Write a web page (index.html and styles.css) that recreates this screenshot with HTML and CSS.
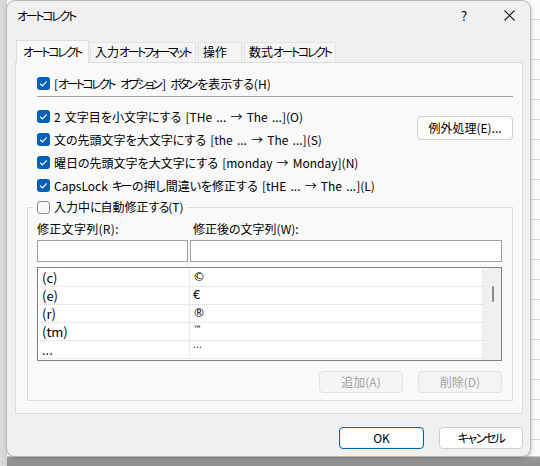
FILE: index.html
```html
<!DOCTYPE html>
<html lang="ja">
<head>
<meta charset="utf-8">
<link rel="stylesheet" href="styles.css">
</head>
<body>
<div class="backdrop">
  <div class="dialog">
    <div class="titlebar">
      <span class="title">オートコレクト</span>
      <span class="help">?</span>
      <span class="close"><svg width="11" height="11" viewBox="0 0 11 11"><path d="M0.5 0.5 L10.5 10.5 M10.5 0.5 L0.5 10.5" stroke="#1a1a1a" stroke-width="1.1" fill="none"/></svg></span>
    </div>
    <div class="tabs">
      <div class="tab active">オートコレクト</div>
      <div class="tab t2">入力<span class="k">オートフォーマット</span></div>
      <div class="tab t3">操作</div>
      <div class="tab t4">数式<span class="k">オートコレクト</span></div>
    </div>
    <div class="panel">
      <div class="row top-row">
        <span class="cb on"><svg viewBox="0 0 13 13"><path d="M3.2 6.8 L5.4 8.9 L9.8 4.4" stroke="#fff" stroke-width="1.3" fill="none"/></svg></span>
        <span class="lbl">[<span class="k">オートコレクト</span> <span class="k">オプション</span>] <span class="k">ボタン</span><span class="h">を</span>表示<span class="h">する</span>(H)</span>
      </div>
      <div class="sep"></div>
      <div class="opts">
        <div class="opt-list">
          <div class="row">
            <span class="cb on"><svg viewBox="0 0 13 13"><path d="M3.2 6.8 L5.4 8.9 L9.8 4.4" stroke="#fff" stroke-width="1.3" fill="none"/></svg></span>
            <span class="lbl">2 文字目<span class="h">を</span>小文字<span class="h">にする</span> [THe ... → The ...](O)</span>
          </div>
          <div class="row">
            <span class="cb on"><svg viewBox="0 0 13 13"><path d="M3.2 6.8 L5.4 8.9 L9.8 4.4" stroke="#fff" stroke-width="1.3" fill="none"/></svg></span>
            <span class="lbl">文<span class="h">の</span>先頭文字<span class="h">を</span>大文字<span class="h">にする</span> [the ... → The ...](S)</span>
          </div>
          <div class="row">
            <span class="cb on"><svg viewBox="0 0 13 13"><path d="M3.2 6.8 L5.4 8.9 L9.8 4.4" stroke="#fff" stroke-width="1.3" fill="none"/></svg></span>
            <span class="lbl">曜日<span class="h">の</span>先頭文字<span class="h">を</span>大文字<span class="h">にする</span> [monday → Monday](N)</span>
          </div>
          <div class="row">
            <span class="cb on"><svg viewBox="0 0 13 13"><path d="M3.2 6.8 L5.4 8.9 L9.8 4.4" stroke="#fff" stroke-width="1.3" fill="none"/></svg></span>
            <span class="lbl">CapsLock <span class="k">キー</span><span class="h">の</span>押<span class="h">し</span>間違<span class="h">いを</span>修正<span class="h">する</span> [tHE ... → The ...](L)</span>
          </div>
        </div>
        <button class="btn exc">例外処理(E)...</button>
      </div>
      <fieldset class="group">
        <legend class="legend">
          <span class="cb off"></span>
          <span class="lbl">入力中<span class="h">に</span>自動修正<span class="h">する</span>(T)</span>
        </legend>
        <div class="fields">
          <div class="flabel">修正文字列(R):</div>
          <div class="flabel f2">修正後<span class="h">の</span>文字列(W):</div>
          <div class="input"></div>
          <div class="input"></div>
        </div>
        <div class="list">
          <div class="rows">
            <div class="lrow"><span class="c1">(c)</span><span class="c2">©</span></div>
            <div class="lrow"><span class="c1">(e)</span><span class="c2">€</span></div>
            <div class="lrow"><span class="c1">(r)</span><span class="c2">®</span></div>
            <div class="lrow"><span class="c1">(tm)</span><span class="c2 small">™</span></div>
            <div class="lrow"><span class="c1">...</span><span class="c2 small">⋯</span></div>
          </div>
          <div class="scroll"><span class="thumb"></span></div>
        </div>
        <div class="actions">
          <button class="btn dis">追加(A)</button>
          <button class="btn dis">削除(D)</button>
        </div>
      </fieldset>
    </div>
    <div class="footer">
      <button class="btn ok">OK</button>
      <button class="btn cancel">キャンセル</button>
    </div>
  </div>
</div>
</body>
</html>
```
FILE: styles.css
```css
* { box-sizing: border-box; }
html, body { margin: 0; padding: 0; }
body {
  width: 540px;
  height: 466px;
  overflow: hidden;
  font-family: "Noto Sans CJK JP", "Noto Sans", sans-serif;
  font-size: 12px;
  color: #000;
  font-feature-settings: "palt";
}
.k { letter-spacing: -2.6px; }
.lbl .k { margin-right: 2px; }
.h { letter-spacing: 0; }
.backdrop {
  width: 540px;
  height: 466px;
  padding: 1px 0 0 7px;
  background:
    linear-gradient(to right, #dcdcdc 0, #d2d2d2 7px, transparent 7px),
    linear-gradient(to bottom, transparent 456px, #9a9a9a 457px, #8e8e8e 466px),
    repeating-linear-gradient(to bottom, #fbfbfb 0, #fbfbfb 19px, #d9d9d9 19px, #d9d9d9 20px);
}
.dialog {
  width: 523px;
  height: 455px;
  background: #f0f0f0;
  border-radius: 8px;
  box-shadow: 0 0 0 1px #b8b8b8, 1px 2px 4px rgba(0,0,0,0.25);
  display: flex;
  flex-direction: column;
}
.titlebar {
  height: 28px;
  display: flex;
  align-items: center;
  padding-left: 10px;
}
.title { flex: 1; letter-spacing: -2.3px; }
.help { width: 20px; margin-right: 30px; font-size: 13px; text-align: center; }
.close { width: 12px; margin-right: 14px; display: flex; }
.tabs {
  margin-top: 11px;
  padding-left: 9px;
  display: flex;
  align-items: flex-end;
  height: 22px;
  position: relative;
  z-index: 1;
}
.tab {
  height: 20px;
  line-height: 18px;
  padding: 0 4px;
  background: #f4f4f4;
  border: 1px solid #e4e4e4;
  border-bottom: none;
  margin-right: 1px;
  white-space: nowrap;
  overflow: hidden;
}
.tab.active {
  height: 23px;
  line-height: 22px;
  background: #f9f9f9;
  border-color: #dcdcdc;
  width: 73px;
  padding-left: 6px;
  margin-bottom: -1px;
  letter-spacing: -2.3px;
}
.tab.t2 { width: 106px; }
.tab.t3 { width: 44px; margin-left: 1px; }
.tab.t4 { width: 92px; margin-left: 1px; }
.tab .k { letter-spacing: -2.4px; }
.panel {
  margin-left: 8px;
  width: 508px;
  height: 352px;
  background: #f9f9f9;
  border: 1px solid #dcdcdc;
  padding: 9px 9px 0 11px;
}
.row {
  height: 23px;
  display: flex;
  align-items: center;
  padding-left: 10px;
}
.lbl { margin-left: 4px; line-height: 16px; white-space: nowrap; word-spacing: 1.5px; }
.cb {
  width: 13px;
  height: 13px;
  border-radius: 3px;
  flex: none;
  display: inline-block;
}
.cb.on { background: #005fb8; }
.cb.on svg { width: 13px; height: 13px; display: block; }
.cb.off { background: #f6f6f6; border: 1px solid #8a8a8a; }
.sep {
  margin: 1px 0 0 10px;
  height: 1px;
  background: #a0a0a0;
}
.opts {
  margin-top: 8px;
  display: flex;
  justify-content: space-between;
}
.btn {
  font-family: inherit;
  font-size: 12px;
  font-feature-settings: "palt";
  color: #000;
  background: #fdfdfd;
  border: 1px solid #d0d0d0;
  border-radius: 4px;
  padding: 0;
  height: 22px;
  line-height: 18px;
}
.btn.exc {
  width: 96px;
  height: 24px;
  margin-top: 11px;
}
.group {
  margin: 2px 0 0 0;
  padding: 6px 10px 7px 9px;
  border: 1px solid #dcdcdc;
  min-inline-size: 0;
}
.legend {
  padding: 0 3px 0 4px;
  margin-left: -4px;
  display: flex;
  align-items: center;
  height: 16px;
}
.legend .h { letter-spacing: -1px; }
.fields {
  display: grid;
  grid-template-columns: 151px 1fr;
  column-gap: 2px;
}
.flabel { height: 19px; line-height: 16px; letter-spacing: 0.3px; }
.flabel.f2 { padding-left: 3px; letter-spacing: 0; }
.input {
  height: 22px;
  background: #fff;
  border: 1px solid #a0a0a0;
}
.list {
  margin-top: 5px;
  height: 94px;
  border: 1px solid #828282;
  background: #fff;
  display: flex;
  overflow: hidden;
}
.rows { flex: 1; padding-top: 1px; }
.lrow {
  height: 18px;
  display: flex;
  border-bottom: 1px dotted #d6d6d6;
  font-size: 13px;
  line-height: 17px;
}
.c1 { width: 152px; padding-left: 4px; border-right: 1px dotted #d6d6d6; }
.c2 {
  flex: 1;
  padding-left: 3px;
  border-right: 1px dotted #d6d6d6;
  font-family: "DejaVu Sans", sans-serif;
  font-size: 12px;
}
.c2.small { font-size: 9px; line-height: 13px; }
.scroll {
  width: 18px;
  background: #f0f0f0;
  position: relative;
}
.thumb {
  position: absolute;
  left: 9px;
  top: 18px;
  width: 2px;
  height: 16px;
  background: #8a8a8a;
  border-radius: 1px;
}
.actions {
  margin-top: 10px;
  display: flex;
  justify-content: flex-end;
  gap: 15px;
}
.btn.dis {
  width: 84px;
  color: #a0a0a0;
  background: #f5f5f5;
  border-color: #e2e2e2;
}
.footer {
  margin-top: 13px;
  padding-right: 7px;
  display: flex;
  justify-content: flex-end;
  gap: 15px;
}
.btn.ok {
  width: 85px;
  border: 1px solid #005fb8;
  box-shadow: inset 0 0 0 1px #e9f1f9;
}
.btn.cancel { width: 84px; letter-spacing: -1.5px; }
```
